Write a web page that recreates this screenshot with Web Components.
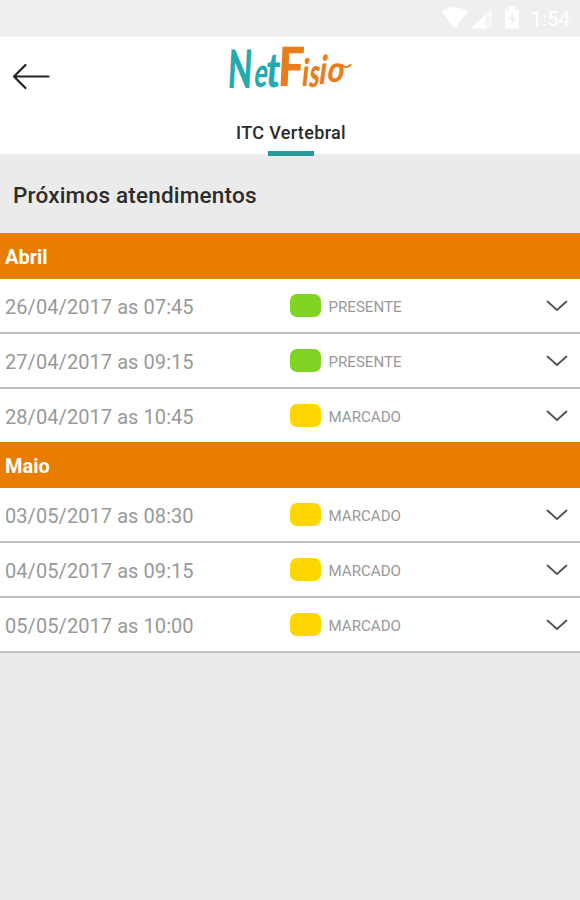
<!DOCTYPE html>
<html lang="pt-BR">
<head>
<meta charset="utf-8">
<title>NetFisio</title>
<style>
  body {
    margin: 0;
    min-height: 900px;
    background: #ebebeb;
    font-family: Roboto, "Liberation Sans", sans-serif;
  }
</style>
</head>
<body>
<nf-status-bar>1:54</nf-status-bar>
<nf-header>ITC Vertebral</nf-header>
<nf-title>Próximos atendimentos</nf-title>
<nf-month name="Abril">
  <nf-appointment status="presente">26/04/2017 as 07:45</nf-appointment>
  <nf-appointment status="presente">27/04/2017 as 09:15</nf-appointment>
  <nf-appointment status="marcado">28/04/2017 as 10:45</nf-appointment>
</nf-month>
<nf-month name="Maio">
  <nf-appointment status="marcado">03/05/2017 as 08:30</nf-appointment>
  <nf-appointment status="marcado">04/05/2017 as 09:15</nf-appointment>
  <nf-appointment status="marcado">05/05/2017 as 10:00</nf-appointment>
</nf-month>

<script>
class NfStatusBar extends HTMLElement {
    constructor() {
        super();
        this.attachShadow({ mode: 'open' });
        this.shadowRoot.innerHTML = `
      <style>
        :host {
          display: flex;
          justify-content: flex-end;
          align-items: center;
          box-sizing: border-box;
          height: 37px;
          padding-right: 10px;
          background: #efefef;
          color: #fff;
          font-size: 20.5px;
          line-height: 36px;
        }

        svg {
          margin: 0 9px 2px 0;
        }
      </style>
      <svg width="80" height="24" viewBox="0 0 80 24" fill="#fff">
        <path d="M0 5.500Q13 -3 27 5.500L13.500 22.500Z"/>
        <path d="M30 22.500 44 9V22.500Z"/>
        <path d="M44 9 51 2.500V22.500H44Z" opacity=".5"/>
        <path fill-rule="evenodd" d="M64 3.500H68V1H74V3.500H78V22.500H64ZM72 6.500 67.500 14H70.500V19L75 11.500H72Z"/>
      </svg>
      <slot></slot>
    `;
    }
}

class NfLogo extends HTMLElement {
    constructor() {
        super();
        this.attachShadow({ mode: 'open' });
        this.shadowRoot.innerHTML = `
      <style>
        :host {
          display: block;
          width: 124px;
          height: 46px;
        }

        svg {
          display: block;
          overflow: visible;
        }

        text {
          font-family: Lato, sans-serif;
          font-weight: 900;
        }

        .net { fill: #25a9b1; }
        .fisio { fill: #e87d1c; }
      </style>
      <svg width="124" height="46" viewBox="0 0 124 46">
        <g class="net">
          <text font-size="53" transform="translate(-1 43) skewX(-3) scale(.6 1)">N</text>
          <text font-size="41" transform="translate(25 42) skewX(-8) scale(.6 1)">e</text>
          <text font-size="48" transform="translate(37 42) skewX(-5) scale(.75 1)">t</text>
        </g>
        <g class="fisio">
          <text font-size="54" transform="translate(49 41) skewX(-3) scale(.86 1)">F</text>
          <text font-size="38" transform="translate(73 41) skewX(-6) scale(.7 1)">i</text>
          <text font-size="40" transform="translate(80 42) skewX(-8) scale(.58 1)">s</text>
          <text font-size="40" transform="translate(90 39) skewX(-8) scale(.7 1)">i</text>
          <text font-size="36" transform="translate(98 37) skewX(-10) scale(.8 1)">o</text>
        </g>
        <path d="M114 20Q118 24 122.500 20" fill="none" stroke="#e87d1c" stroke-width="2" stroke-linecap="round"/>
      </svg>
    `;
    }
}

class NfHeader extends HTMLElement {
    constructor() {
        super();
        this.attachShadow({ mode: 'open' });
        this.shadowRoot.innerHTML = `
      <style>
        :host {
          display: block;
          height: 117px;
          background: #fff;
        }

        .bar {
          display: grid;
          grid-template-columns: 1fr auto 1fr;
          height: 77px;
        }

        .back {
          margin: 26px 0 0 12px;
        }

        nf-logo {
          margin-top: 8px;
        }

        .tab {
          display: flex;
          flex-direction: column;
          align-items: center;
          width: 580px;
          padding-left: 1px;
          color: #2a2a2a;
          font-size: 18px;
          font-weight: 500;
          letter-spacing: .35px;
          line-height: 37px;
        }

        .tab::after {
          content: "";
          width: 46px;
          height: 5px;
          background: #259b9b;
        }
      </style>
      <div class="bar">
        <svg class="back" width="38" height="28" viewBox="0 0 38 28" fill="none" stroke="#222" stroke-width="2.2" stroke-linecap="round" stroke-linejoin="round">
          <path d="M36.500 13.500H2M13.500 2 2 13.500 13.500 25"/>
        </svg>
        <nf-logo></nf-logo>
      </div>
      <div class="tab"><slot></slot></div>
    `;
    }
}

class NfTitle extends HTMLElement {
    constructor() {
        super();
        this.attachShadow({ mode: 'open' });
        this.shadowRoot.innerHTML = `
      <style>
        :host {
          display: block;
          height: 79px;
          padding-left: 13px;
          color: #2c2c2c;
          font-size: 22.5px;
          font-weight: 500;
          line-height: 82px;
          letter-spacing: .2px;
        }
      </style>
      <slot></slot>
    `;
    }
}

class NfMonth extends HTMLElement {
    constructor() {
        super();
        this.attachShadow({ mode: 'open' });
        this.shadowRoot.innerHTML = `
      <style>
        :host {
          display: block;
        }

        /* the next month's bar covers the last divider */
        :host(:not(:first-of-type)) {
          margin-top: -2px;
        }

        .name {
          position: relative;
          height: 46px;
          padding-left: 5px;
          background: #e97d00;
          color: #fff;
          font-size: 20px;
          font-weight: 700;
          line-height: 49px;
        }
      </style>
      <div class="name"></div>
      <slot></slot>
    `;
        this.shadowRoot.querySelector('.name').textContent = this.getAttribute('name');
    }
}

class NfAppointment extends HTMLElement {
    constructor() {
        super();
        this.attachShadow({ mode: 'open' });
        this.shadowRoot.innerHTML = `
      <style>
        :host {
          display: grid;
          grid-template-columns: 285px 38.5px 1fr 22px;
          align-items: center;
          box-sizing: border-box;
          height: 55px;
          padding: 0 12px 0 5px;
          border-bottom: 2px solid #c1c1c1;
          background: #fff;
          color: #999;
          font-size: 20px;
          letter-spacing: .07px;
        }

        span {
          padding-top: 2px;
        }

        .badge {
          width: 31px;
          height: 23px;
          border-radius: 7px;
          background: #ffd600;
        }

        :host([status="presente"]) .badge {
          background: #80d522;
        }

        .label {
          font-size: 15.1px;
          letter-spacing: 0;
          text-transform: uppercase;
        }
      </style>
      <span><slot></slot></span>
      <div class="badge"></div>
      <span class="label"></span>
      <svg width="22" height="12" viewBox="0 0 22 12" fill="none" stroke="#505050" stroke-width="1.8" stroke-linecap="round">
        <path d="M1.500 1.500 11 10 20.500 1.500"/>
      </svg>
    `;
        this.shadowRoot.querySelector('.label').textContent = this.getAttribute('status');
    }
}

customElements.define('nf-status-bar', NfStatusBar);
customElements.define('nf-logo', NfLogo);
customElements.define('nf-header', NfHeader);
customElements.define('nf-title', NfTitle);
customElements.define('nf-month', NfMonth);
customElements.define('nf-appointment', NfAppointment);
</script>
</body>
</html>
